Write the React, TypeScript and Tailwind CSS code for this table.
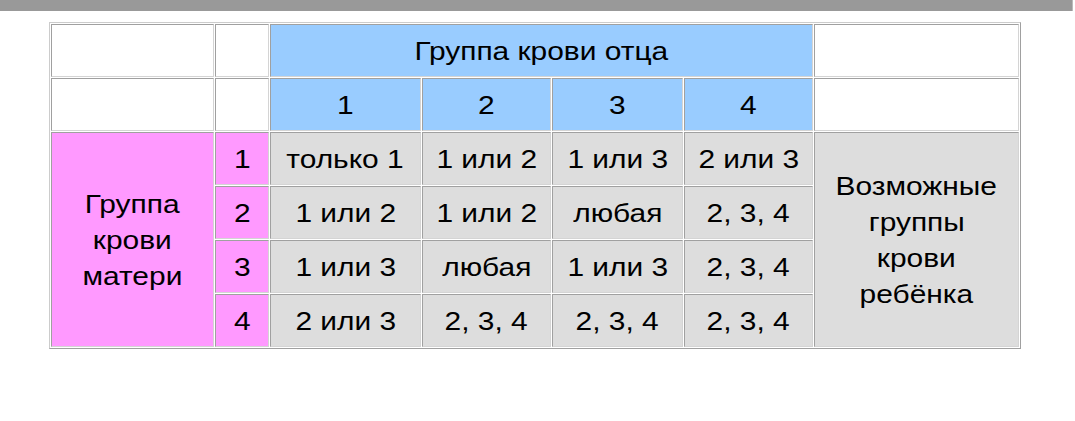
import React from "react";

const cellBase =
  "flex flex-col items-center justify-center text-center border border-t-[#a0a0a0] border-l-[#a0a0a0] border-b-[#d4d4d4] border-r-[#d4d4d4] leading-[36px]";

function T({ children }: { children: React.ReactNode }) {
  return <span className="inline-block whitespace-nowrap scale-x-[1.15] origin-center">{children}</span>;
}

export default function App() {
  const rows = [
    ["только 1", "1 или 2", "1 или 3", "2 или 3"],
    ["1 или 2", "1 или 2", "любая", "2, 3, 4"],
    ["1 или 3", "любая", "1 или 3", "2, 3, 4"],
    ["2 или 3", "2, 3, 4", "2, 3, 4", "2, 3, 4"],
  ];
  return (
    <div
      className="w-[1075px] h-[421px] bg-white text-black"
      style={{ fontFamily: '"Liberation Sans", Arial, sans-serif' }}
    >
      <div className="h-[11px] w-[1073px] bg-[#999999] border-r border-r-[#bbbbbb]" />
      <div className="ml-[49px] mt-[11px] w-[972px] p-[1px] border border-t-[#cccccc] border-l-[#cccccc] border-b-[#a0a0a0] border-r-[#a0a0a0]">
        <div className="grid grid-cols-[163px_54px_151px_129px_131px_129px_205px] grid-rows-[repeat(6,53px)] gap-[1px] text-[26px]">
          <div className={`${cellBase} bg-white`} />
          <div className={`${cellBase} bg-white`} />
          <div className={`${cellBase} bg-[#99ccff] col-span-4`}>
            <T>Группа крови отца</T>
          </div>
          <div className={`${cellBase} bg-white`} />

          <div className={`${cellBase} bg-white`} />
          <div className={`${cellBase} bg-white`} />
          {["1", "2", "3", "4"].map((n) => (
            <div key={n} className={`${cellBase} bg-[#99ccff]`}>
              <T>{n}</T>
            </div>
          ))}
          <div className={`${cellBase} bg-white`} />

          <div className={`${cellBase} bg-[#ff99ff] row-span-4`}>
            <T>Группа</T>
            <T>крови</T>
            <T>матери</T>
          </div>
          <div className={`${cellBase} bg-[#ff99ff]`}>
            <T>1</T>
          </div>
          {rows[0].map((t, i) => (
            <div key={"a" + i} className={`${cellBase} bg-[#dddddd]`}>
              <T>{t}</T>
            </div>
          ))}
          <div className={`${cellBase} bg-[#dddddd] row-span-4`}>
            <T>Возможные</T>
            <T>группы</T>
            <T>крови</T>
            <T>ребёнка</T>
          </div>
          {rows.slice(1).map((r, ri) => (
            <React.Fragment key={"r" + ri}>
              <div className={`${cellBase} bg-[#ff99ff]`}>
                <T>{ri + 2}</T>
              </div>
              {r.map((t, i) => (
                <div key={i} className={`${cellBase} bg-[#dddddd]`}>
                  <T>{t}</T>
                </div>
              ))}
            </React.Fragment>
          ))}
        </div>
      </div>
    </div>
  );
}
